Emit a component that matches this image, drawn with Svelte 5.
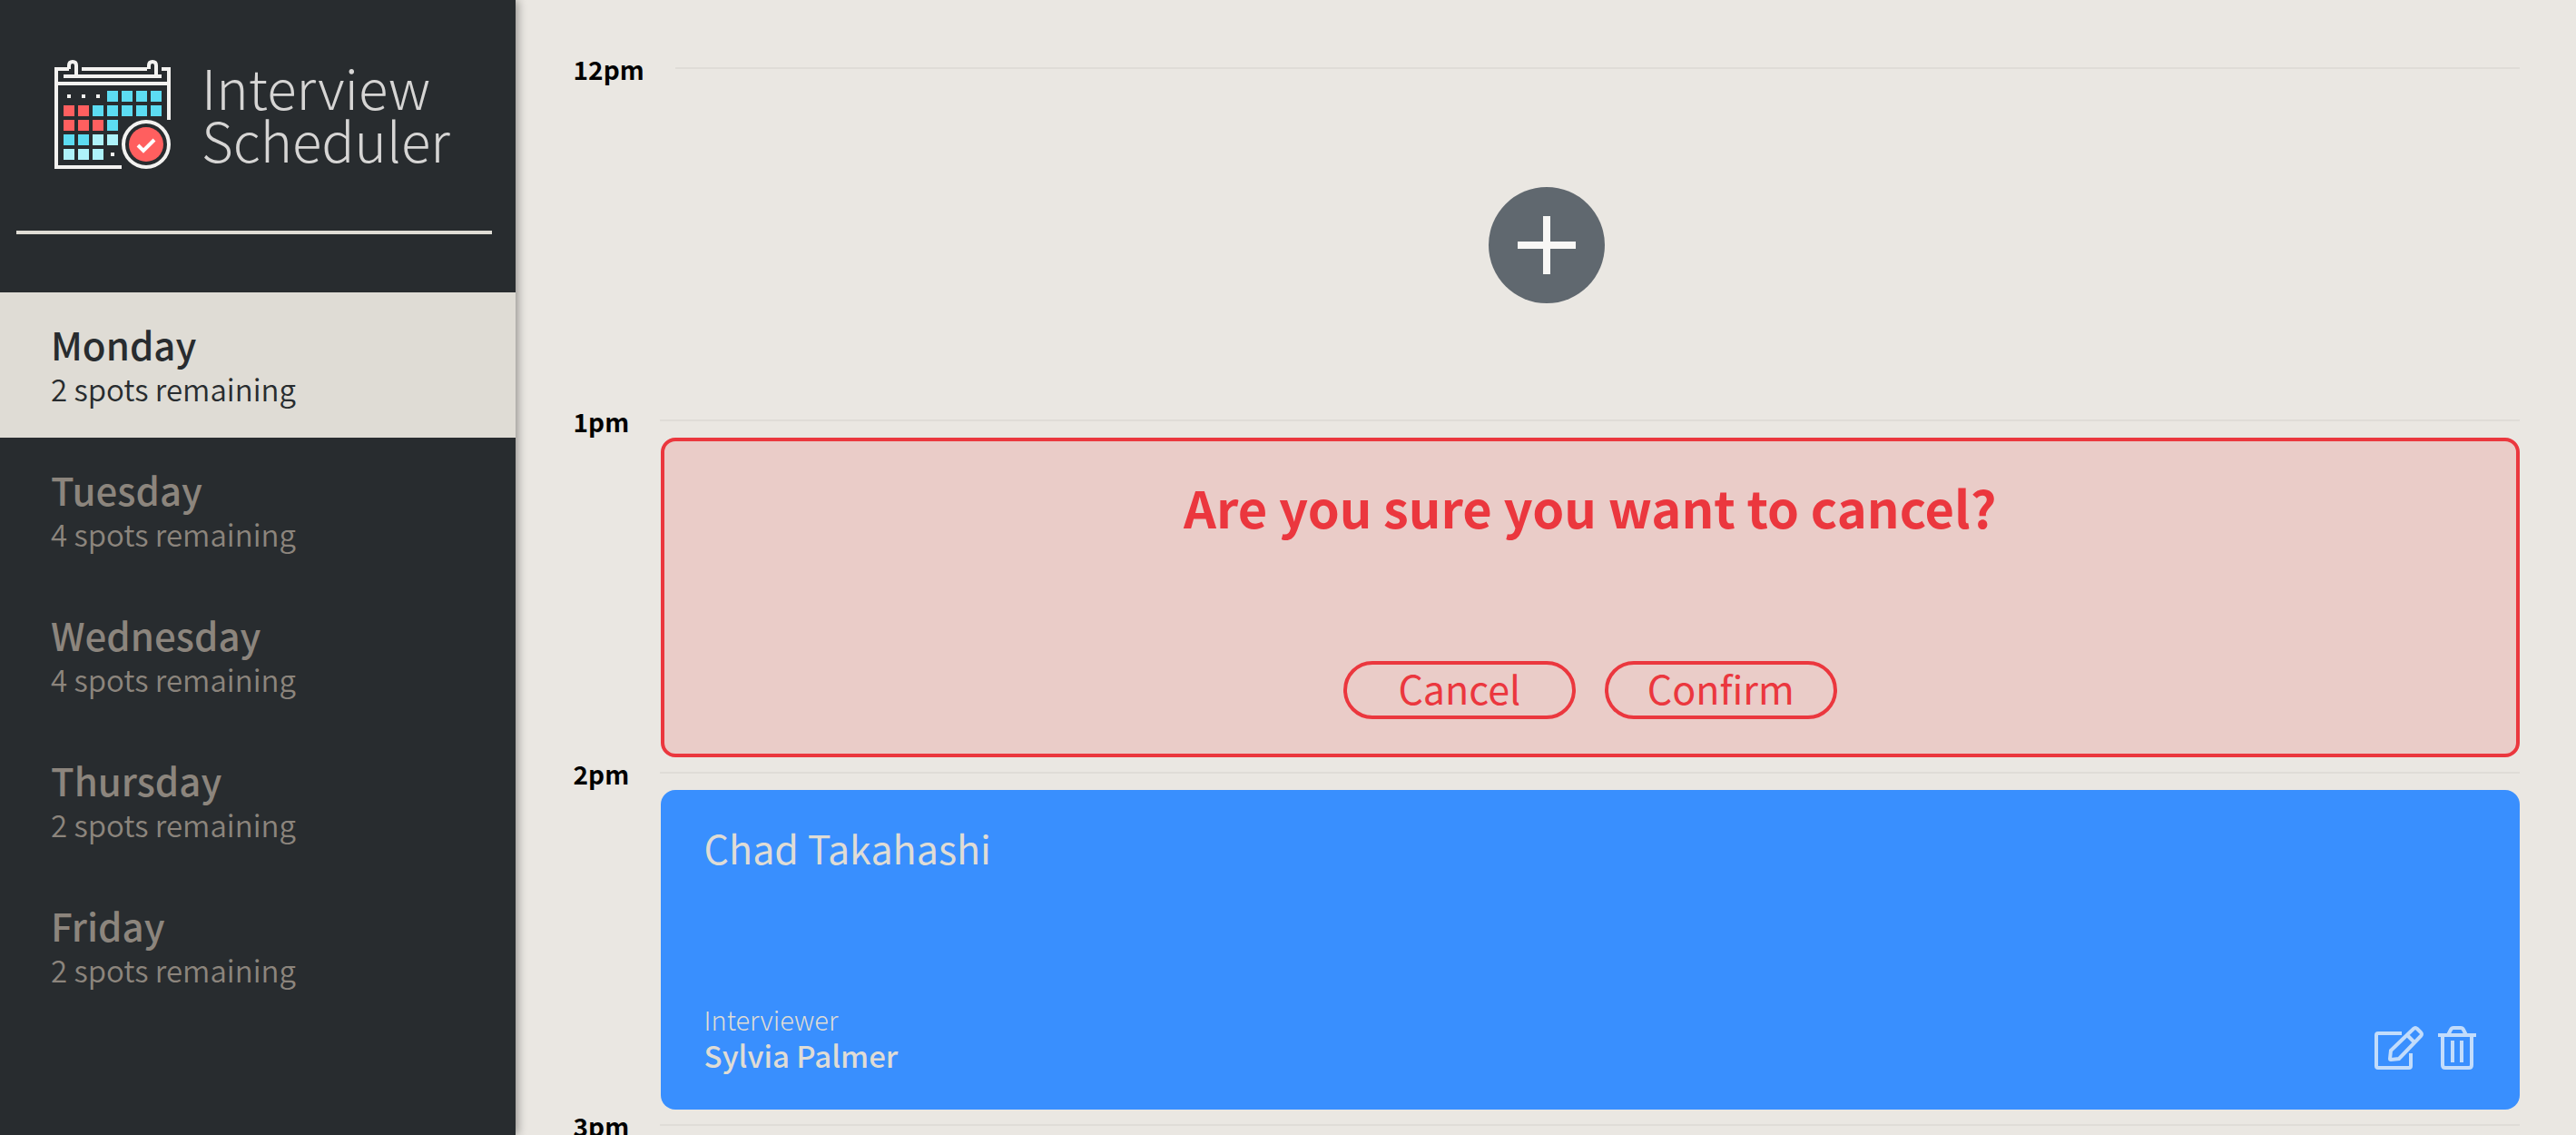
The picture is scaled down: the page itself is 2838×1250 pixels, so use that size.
<script>
  const days = [
    { name: 'Monday', spots: 2 },
    { name: 'Tuesday', spots: 4 },
    { name: 'Wednesday', spots: 4 },
    { name: 'Thursday', spots: 2 },
    { name: 'Friday', spots: 2 },
  ];
  const slots = [
    { time: '12pm', mode: 'empty' },
    { time: '1pm', mode: 'confirm' },
    { time: '2pm', mode: 'show', student: 'Chad Takahashi', interviewer: 'Sylvia Palmer' },
    { time: '3pm', mode: 'none' },
  ];
  // b = booked, o = open, l = light, d = dot, '.' = nothing
  const cells = ['dddoooo', 'bbooooo', 'bbbo...', 'ooll...', 'llld...'];
  const fills = { b: '#ff5f5f', o: '#5cdcf2', l: '#aef2fa' };

  let selected = $state('Monday');
</script>

<div class="layout">
  <aside class="sidebar">
    <div class="brand">
      <svg width="128" height="120" viewBox="0 0 128 120" fill="none" aria-hidden="true">
        <g stroke="#f3f2f0" stroke-width="4">
          <path d="M16 10H2V118H74M30 10H102M118 10H126V66M10 18H118M2 26H126" />
          <path d="M16 10V6Q16 2 20 2Q24 2 24 6V17M104 10V6Q104 2 108 2Q112 2 112 6V17" />
          <circle cx="101" cy="93" r="25" />
        </g>
        {#each cells as row, y}
          {#each row as cell, x}
            {#if cell === 'd'}
              <rect x={14 + 16 * x} y={38 + 16 * y} width="4" height="4" fill="#f3f2f0" />
            {:else if cell !== '.'}
              <rect x={10 + 16 * x} y={34 + 16 * y} width="12" height="12" fill={fills[cell]} />
            {/if}
          {/each}
        {/each}
        <circle cx="101" cy="93" r="19" fill="#ff5f5f" />
        <path d="M92 94L98 100L110 88" stroke="#fff" stroke-width="4" />
      </svg>
      <h1>Interview<br />Scheduler</h1>
    </div>
    <hr />
    <nav>
      <ul>
        {#each days as day}
          <li>
            <button class="day" class:selected={selected === day.name} onclick={() => (selected = day.name)}>
              <span class="day-name">{day.name}</span>
              <span class="day-spots">{day.spots} spots remaining</span>
            </button>
          </li>
        {/each}
      </ul>
    </nav>
  </aside>

  <main>
    {#each slots as slot}
      <article>
        <header>
          <h2>{slot.time}</h2>
          <div class="rule"></div>
        </header>
        {#if slot.mode === 'empty'}
          <div class="empty">
            <button class="add" aria-label="Add">
              <svg width="64" height="64" viewBox="0 0 64 64" aria-hidden="true">
                <path d="M32 0V64M0 32H64" stroke="#f8f7f5" stroke-width="8" />
              </svg>
            </button>
          </div>
        {:else if slot.mode === 'confirm'}
          <section class="card confirm">
            <h3>Are you sure you want to cancel?</h3>
            <div class="actions">
              <button>Cancel</button>
              <button>Confirm</button>
            </div>
          </section>
        {:else if slot.mode === 'show'}
          <section class="card show">
            <h3>{slot.student}</h3>
            <div class="details">
              <div>
                <h4>Interviewer</h4>
                <p>{slot.interviewer}</p>
              </div>
              <div class="tools">
                <button aria-label="Edit">
                  <svg width="54" height="48" viewBox="0 0 54 48" aria-hidden="true">
                    <path d="M30 8H4Q2 8 2 10V44Q2 46 4 46H38Q40 46 40 44V30" />
                    <path d="M43 3Q45 1 47 3L51 7Q53 9 51 11L27 36L18 37Q17 37 17 36L18 27ZM36 10L44 18" />
                  </svg>
                </button>
                <button aria-label="Delete">
                  <svg width="42" height="48" viewBox="0 0 42 48" aria-hidden="true">
                    <path d="M0 10H42M11 10L14 4Q15 2 17 2H25Q27 2 28 4L31 10" />
                    <path d="M5 10V43Q5 46 8 46H34Q37 46 37 43V10M16 16V40M26 16V40" />
                  </svg>
                </button>
              </div>
            </div>
          </section>
        {/if}
      </article>
    {/each}
  </main>
</div>

<style>
  :global(body) {
    background: #eae7e2;
    font-family: 'Noto Sans CJK JP', 'Noto Sans', sans-serif;
  }
  * {
    box-sizing: border-box;
    margin: 0;
    padding: 0;
  }
  button {
    font-family: inherit;
    border: 0;
    background: none;
    color: inherit;
    cursor: pointer;
  }
  svg {
    display: block;
  }
  .layout {
    display: flex;
    height: 100vh;
  }
  .sidebar {
    flex: 0 0 20%;
    background: #282c2f;
    box-shadow: 2px 0 10px rgba(0, 0, 0, 0.4);
  }
  .brand {
    display: flex;
    gap: 34px;
    padding: 66px 0 68px 60px;
  }
  h1 {
    font-size: 60px;
    line-height: 58px;
    height: 120px;
    font-weight: 300;
    color: #d6d5d4;
  }
  hr {
    border: 0;
    height: 4px;
    margin: 0 26px 64px 18px;
    background: #dfdcd5;
  }
  ul {
    list-style: none;
  }
  .day {
    display: block;
    width: 100%;
    height: 160px;
    padding: 28px 56px 34px;
    text-align: left;
    color: #8c857d;
  }
  .day.selected {
    background: #dfdcd5;
    color: #282c2f;
  }
  .day-name {
    display: block;
    font-size: 42px;
    line-height: 58px;
    font-weight: 500;
  }
  .day-spots {
    display: block;
    font-size: 33px;
    line-height: 40px;
    font-weight: 350;
  }
  main {
    flex: 1;
    min-width: 0;
    padding: 58px 62px 0 64px;
    overflow-y: auto;
    scrollbar-width: none;
  }
  header {
    display: flex;
    align-items: center;
    gap: 34px;
    height: 34px;
    margin-bottom: 2px;
  }
  h2 {
    padding-top: 2px;
    font-size: 28px;
    line-height: 34px;
    font-weight: 700;
    color: #000;
  }
  .rule {
    flex: 1;
    height: 2px;
    background: #dfdcd7;
  }
  .empty {
    display: flex;
    align-items: center;
    justify-content: center;
    height: 352px;
  }
  .add {
    display: grid;
    place-items: center;
    width: 128px;
    height: 128px;
    border-radius: 50%;
    background: #60686f;
  }
  .card {
    display: flex;
    flex-direction: column;
    justify-content: space-between;
    height: 352px;
    margin-left: 96px;
    border-radius: 16px;
  }
  .confirm {
    align-items: center;
    padding: 40px 38px 38px;
    border: 4px solid #eb373e;
    background: #eaccc8;
    color: #eb373e;
  }
  .confirm h3 {
    font-size: 56px;
    line-height: 64px;
    font-weight: 700;
  }
  .actions {
    display: flex;
    gap: 32px;
  }
  .actions button {
    width: 256px;
    height: 64px;
    padding-bottom: 6px;
    border: 4px solid #eb373e;
    border-radius: 32px;
    font-size: 43px;
    line-height: 50px;
  }
  .show {
    padding: 35px 48px 40px;
    background: #398ffe;
    color: #dfdcd5;
  }
  .show h3 {
    font-size: 43px;
    line-height: 56px;
    font-weight: 400;
  }
  .details {
    display: flex;
    align-items: flex-end;
    justify-content: space-between;
  }
  h4 {
    font-size: 29px;
    line-height: 40px;
    font-weight: 300;
  }
  .details p {
    font-size: 33px;
    line-height: 40px;
    font-weight: 500;
  }
  .tools {
    display: flex;
    gap: 16px;
    padding-bottom: 4px;
  }
  .tools path {
    fill: none;
    stroke: #c2dcfb;
    stroke-width: 4;
  }
</style>
